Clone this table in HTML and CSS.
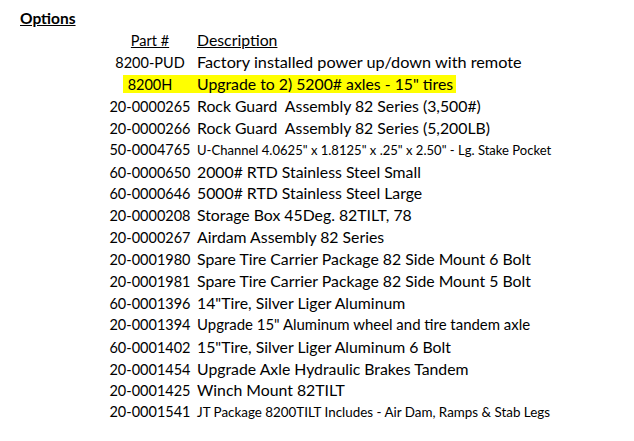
FILE: index.html
```html
<!DOCTYPE html>
<html>
<head>
<meta charset="utf-8">
<link rel="stylesheet" href="styles.css">
</head>
<body>
<div class="page">
  <div class="title">Options</div>
  <div class="table">
    <div class="row head"><span class="part"><u>Part #</u></span><span class="desc"><u>Description</u></span></div>
    <div class="row"><span class="part">8200-PUD</span><span class="desc wide">Factory installed power up/down with remote</span></div>
    <div class="row hl"><span class="part">8200H</span><span class="desc">Upgrade to 2) 5200# axles - 15" tires</span></div>
    <div class="row"><span class="part">20-0000265</span><span class="desc">Rock Guard&nbsp; Assembly 82 Series (3,500#)</span></div>
    <div class="row"><span class="part">20-0000266</span><span class="desc">Rock Guard&nbsp; Assembly 82 Series (5,200LB)</span></div>
    <div class="row"><span class="part">50-0004765</span><span class="desc small">U-Channel 4.0625" x 1.8125" x .25" x 2.50" - Lg. Stake Pocket</span></div>
    <div class="row"><span class="part">60-0000650</span><span class="desc">2000# RTD Stainless Steel Small</span></div>
    <div class="row"><span class="part">60-0000646</span><span class="desc">5000# RTD Stainless Steel Large</span></div>
    <div class="row"><span class="part">20-0000208</span><span class="desc">Storage Box 45Deg. 82TILT, 78</span></div>
    <div class="row"><span class="part">20-0000267</span><span class="desc">Airdam Assembly 82 Series</span></div>
    <div class="row"><span class="part">20-0001980</span><span class="desc">Spare Tire Carrier Package 82 Side Mount 6 Bolt</span></div>
    <div class="row"><span class="part">20-0001981</span><span class="desc">Spare Tire Carrier Package 82 Side Mount 5 Bolt</span></div>
    <div class="row"><span class="part">60-0001396</span><span class="desc">14"Tire, Silver Liger Aluminum</span></div>
    <div class="row"><span class="part">20-0001394</span><span class="desc narrow">Upgrade 15" Aluminum wheel and tire tandem axle</span></div>
    <div class="row"><span class="part">60-0001402</span><span class="desc">15"Tire, Silver Liger Aluminum 6 Bolt</span></div>
    <div class="row"><span class="part">20-0001454</span><span class="desc">Upgrade Axle Hydraulic Brakes Tandem</span></div>
    <div class="row"><span class="part">20-0001425</span><span class="desc">Winch Mount 82TILT</span></div>
    <div class="row"><span class="part">20-0001541</span><span class="desc small jt">JT Package 8200TILT Includes - Air Dam, Ramps &amp; Stab Legs</span></div>
  </div>
</div>
</body>
</html>
```
FILE: styles.css
```css
html, body {
  margin: 0;
  padding: 0;
  background: #fff;
}
.page {
  font-family: Lato, "Open Sans", sans-serif;
  color: #000;
  padding: 7.5px 0 0 20px;
}
.title {
  font-size: 15.5px;
  font-weight: bold;
  text-decoration: underline;
  line-height: 20px;
  height: 21.7px;
}
.table {
  display: flex;
  flex-direction: column;
}
.row {
  display: flex;
  align-items: baseline;
  height: 21.9px;
  line-height: 21.9px;
  margin-left: 85px;
  white-space: nowrap;
}
.part {
  flex: 0 0 90px;
  margin-right: 2px;
  text-align: center;
  font-size: 14.5px;
}
.desc {
  font-size: 15.8px;
}
.desc.wide {
  font-size: 16.25px;
}
.desc.narrow {
  font-size: 14.95px;
}
.desc.small {
  font-size: 13.05px;
}
.desc.small.jt {
  font-size: 13.4px;
}
.hl {
  background: linear-gradient(#ff0, #ff0) no-repeat;
  background-position: 18.3px 1.7px;
  background-size: 333.4px 18.3px;
}
```
